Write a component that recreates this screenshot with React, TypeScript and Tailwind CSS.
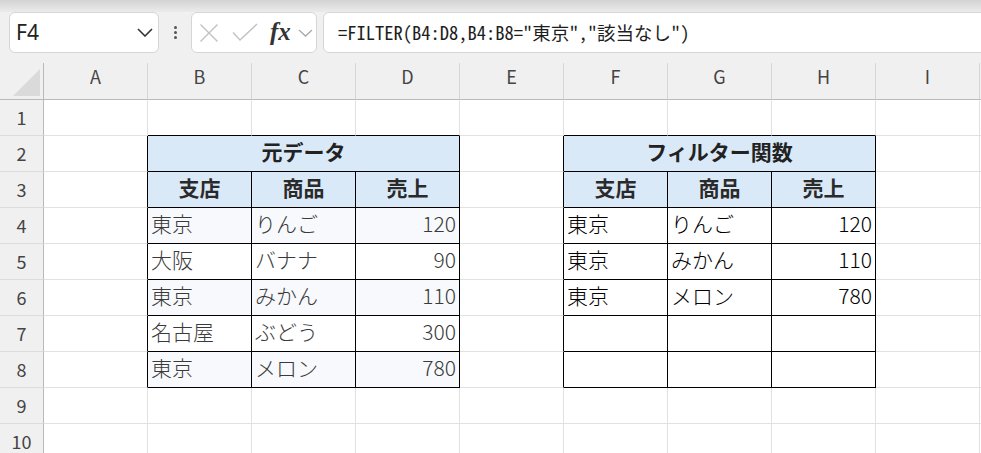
import React from "react";

type CellDef = { text: string; kind: "title" | "head" | "data" | "num"; tone: "left" | "right"; hl?: boolean };

const COLS = ["A", "B", "C", "D", "E", "F", "G", "H", "I"];

const inT = (r: number, c: number) =>
  r >= 2 && r <= 8 && ((c >= 1 && c <= 3) || (c >= 5 && c <= 7));

const leftData = [
  ["東京", "りんご", "120"],
  ["大阪", "バナナ", "90"],
  ["東京", "みかん", "110"],
  ["名古屋", "ぶどう", "300"],
  ["東京", "メロン", "780"],
];
const rightData = [
  ["東京", "りんご", "120"],
  ["東京", "みかん", "110"],
  ["東京", "メロン", "780"],
];

function cellAt(r: number, c: number): CellDef | null {
  if (r === 3) {
    const h = ["支店", "商品", "売上"];
    if (c >= 1 && c <= 3) return { text: h[c - 1], kind: "head", tone: "left" };
    if (c >= 5 && c <= 7) return { text: h[c - 5], kind: "head", tone: "right" };
  }
  if (r >= 4 && r <= 8) {
    if (c >= 1 && c <= 3) {
      const row = leftData[r - 4];
      return { text: row[c - 1], kind: c === 3 ? "num" : "data", tone: "left", hl: row[0] === "東京" };
    }
    if (c >= 5 && c <= 7) {
      const row = rightData[r - 4];
      if (!row) return { text: "", kind: "data", tone: "right" };
      return { text: row[c - 5], kind: c === 7 ? "num" : "data", tone: "right" };
    }
  }
  return null;
}

function Row({ r }: { r: number }) {
  const cells: React.ReactNode[] = [];
  for (let c = 0; c < 9; c++) {
    const merged = r === 2 && (c === 1 || c === 5);
    const endC = merged ? c + 2 : c;
    const rightBlack = inT(r, endC) || inT(r, endC + 1);
    const bottomBlack = inT(r, c) || inT(r + 1, c);
    const rb = rightBlack ? "border-r-black" : "border-r-[#e1e1e1]";
    const bb = bottomBlack ? "border-b-black" : "border-b-[#e1e1e1]";
    const w = merged ? "w-[312px]" : "w-[104px]";
    let content: React.ReactNode = null;
    let bg = "bg-white";
    let align = "justify-start";
    if (merged) {
      bg = "bg-[#dae9f8]";
      align = "justify-center";
      content = (
        <span className="font-bold text-[#222]">{c === 1 ? "元データ" : "フィルター関数"}</span>
      );
    } else {
      const d = cellAt(r, c);
      if (d) {
        if (d.kind === "head") {
          bg = "bg-[#dae9f8]";
          align = "justify-center";
          content = <span className="font-bold text-[#2a2a2a]">{d.text}</span>;
        } else {
          if (d.hl) bg = "bg-[#f7f9fc]";
          align = d.kind === "num" ? "justify-end" : "justify-start";
          content = (
            <span className={d.tone === "left" ? "font-light text-[#3a3a3a]" : "font-light text-black"}>
              {d.text}
            </span>
          );
        }
      }
    }
    cells.push(
      <div
        key={c}
        className={`${w} ${bg} ${align} ${rb} ${bb} h-[36px] shrink-0 border-r border-b flex items-center px-[3px] pb-[3px] text-[21px] whitespace-nowrap`}
      >
        {content}
      </div>
    );
    if (merged) c += 2;
  }
  return (
    <div className="flex">
      <div className="w-[44px] h-[36px] shrink-0 bg-[#f0f0f0] border-r border-r-[#b9b9b9] border-b border-b-[#dcdcdc] flex items-center justify-center text-[18px] text-[#444]">
        {r}
      </div>
      {cells}
      <div className="flex-1 h-[36px] bg-white border-b border-b-[#e1e1e1]" />
    </div>
  );
}

export default function App() {
  return (
    <div className="w-[981px] h-[453px] overflow-hidden bg-[#f0f0f0] font-['Noto_Sans_CJK_JP',sans-serif]">
      <div className="h-[12px] bg-linear-to-b from-[#d4d4d4] to-[#ebebeb]" />
      <div className="flex items-start h-[51px] pl-[9px]">
        <div className="w-[150px] h-[41px] shrink-0 bg-white border border-[#d6d6d6] rounded-[6px] flex items-center justify-between pl-[6px] pr-[5px]">
          <span className="font-['Noto_Sans',sans-serif] text-[21px] text-[#222]">F4</span>
          <svg width="16" height="9" viewBox="0 0 16 9">
            <path d="M1 1 L8 8 L15 1" fill="none" stroke="#333" strokeWidth="1.6" />
          </svg>
        </div>
        <div className="w-[32px] h-[41px] shrink-0 flex flex-col items-center justify-center gap-[2px]">
          <div className="w-[3px] h-[3px] rounded-full bg-[#555]" />
          <div className="w-[3px] h-[3px] rounded-full bg-[#555]" />
          <div className="w-[3px] h-[3px] rounded-full bg-[#555]" />
        </div>
        <div className="w-[126px] h-[41px] shrink-0 bg-white border border-[#d6d6d6] rounded-[6px] flex items-center pl-[7px]">
          <svg width="20" height="20" viewBox="0 0 20 20">
            <path d="M1.5 1.5 L18.5 18.5 M18.5 1.5 L1.5 18.5" fill="none" stroke="#c2c2c2" strokeWidth="1.4" />
          </svg>
          <svg width="26" height="19" viewBox="0 0 26 19" className="ml-[13px]">
            <path d="M1 9.5 L8 17 L25 1" fill="none" stroke="#c2c2c2" strokeWidth="1.4" />
          </svg>
          <span className="ml-[12px] font-['Liberation_Serif',serif] italic font-bold text-[25px] leading-none text-[#333] -mt-[2px]">
            fx
          </span>
          <svg width="15" height="8" viewBox="0 0 15 8" className="ml-[7px]">
            <path d="M1 1 L7.5 7 L14 1" fill="none" stroke="#a8a8a8" strokeWidth="1.3" />
          </svg>
        </div>
        <div className="ml-[6px] w-[700px] h-[41px] shrink-0 bg-white border border-[#d6d6d6] rounded-l-[6px] flex items-center pl-[14px]">
          <span className="text-[18.5px] text-[#1e1e1e] whitespace-nowrap [font-feature-settings:'hwid']">
            =FILTER(B4:D8,B4:B8="東京","該当なし")
          </span>
        </div>
      </div>
      <div className="flex">
        <div className="w-[44px] h-[37px] shrink-0 border-r border-r-[#b9b9b9] border-b border-b-[#b9b9b9] flex items-end justify-end pr-[3px] pb-[3px]">
          <div className="w-0 h-0 border-l-[27px] border-l-transparent border-b-[27px] border-b-[#dadada]" />
        </div>
        {COLS.map((l) => (
          <div
            key={l}
            className="w-[104px] h-[37px] shrink-0 border-r border-r-[#d6d6d6] border-b border-b-[#b9b9b9] flex items-center justify-center pb-[9px] text-[18px] text-[#444]"
          >
            {l}
          </div>
        ))}
        <div className="flex-1 h-[37px] border-b border-b-[#b9b9b9]" />
      </div>
      {[1, 2, 3, 4, 5, 6, 7, 8, 9, 10].map((r) => (
        <Row key={r} r={r} />
      ))}
    </div>
  );
}
